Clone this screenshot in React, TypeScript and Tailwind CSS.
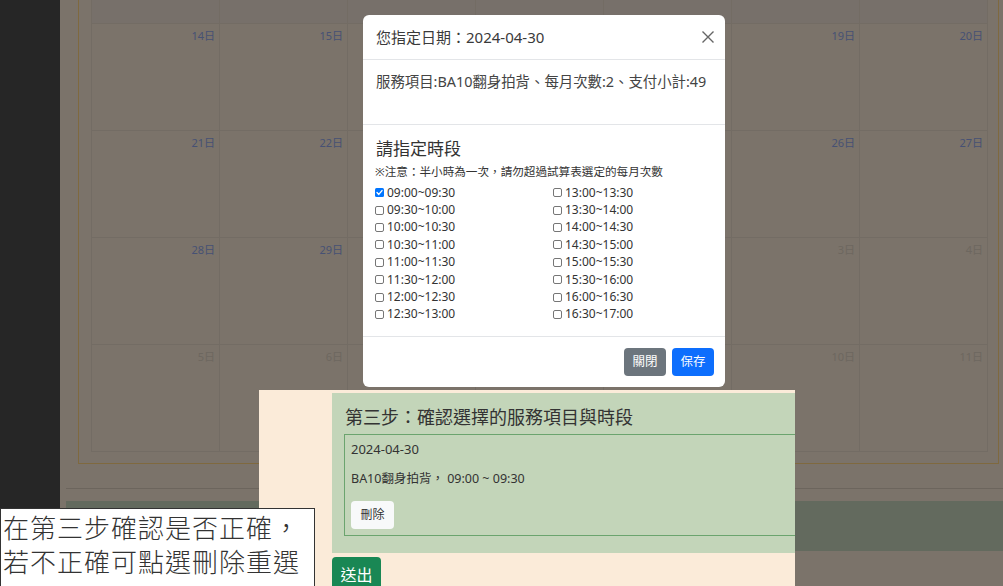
import React from 'react';

// Calendar weeks behind the dialog (dimmed by the backdrop).
// Days sitting under the dialog are left blank: they can't be seen.
type Cell = { day: number; out?: boolean; hidden?: boolean };

const mk = (days: number[], out: boolean[] = []): Cell[] =>
  days.map((d, i) => ({ day: d, out: out[i], hidden: i >= 2 && i <= 4 }));

const weeks: Cell[][] = [
  mk([14, 15, 16, 17, 18, 19, 20]),
  mk([21, 22, 23, 24, 25, 26, 27]),
  mk([28, 29, 30, 1, 2, 3, 4], [false, false, false, true, true, true, true]),
  mk([5, 6, 7, 8, 9, 10, 11], [true, true, true, true, true, true, true]),
];

const leftSlots = [
  '09:00~09:30', '09:30~10:00', '10:00~10:30', '10:30~11:00',
  '11:00~11:30', '11:30~12:00', '12:00~12:30', '12:30~13:00',
];
const rightSlots = [
  '13:00~13:30', '13:30~14:00', '14:00~14:30', '14:30~15:00',
  '15:00~15:30', '15:30~16:00', '16:00~16:30', '16:30~17:00',
];

const Checkbox: React.FC<{ checked?: boolean }> = ({ checked }) =>
  checked ? (
    <svg width="9" height="9" viewBox="0 0 9 9" className="mr-[3px] shrink-0">
      <rect x="0" y="0" width="9" height="9" rx="1.5" fill="#0075ff" />
      <path d="M2 4.6 L3.8 6.4 L7 2.6" fill="none" stroke="#fff" strokeWidth="1.4" strokeLinecap="round" strokeLinejoin="round" />
    </svg>
  ) : (
    <span className="mr-[3px] w-[9px] h-[9px] shrink-0 border border-[#767676] rounded-[2px] bg-white" />
  );

const SlotColumn: React.FC<{ slots: string[]; checked?: string }> = ({ slots, checked }) => (
  <div className="flex flex-col">
    {slots.map((s) => (
      <label key={s} className="flex items-center h-[17.4px] text-[12px] text-[#333]">
        <Checkbox checked={s === checked} />
        {s}
      </label>
    ))}
  </div>
);

const App: React.FC = () => {
  return (
    <div className="relative w-[1003px] h-[586px] overflow-hidden flex bg-[#7b736a] font-['Noto_Sans','Noto_Sans_CJK_TC',sans-serif]">
      {/* Sidebar */}
      <div className="w-[60px] shrink-0 bg-[#262626]" />

      {/* Main area (dimmed) */}
      <div className="flex-1 flex flex-col pl-[6px]">
        <div className="ml-[12px] w-[921px] border-x border-b border-[#7f693f] pl-[12px] pr-[10px] pb-[11px]">
          <div className="grid grid-cols-7 border-l border-[#736c64]">
            {Array.from({ length: 7 }).map((_, i) => (
              <div key={'top' + i} className="h-[24px] bg-[#77706a] border-r border-b border-[#736c64]" />
            ))}
            {weeks.map((week, wi) =>
              week.map((c) => (
                <div
                  key={wi + '-' + c.day}
                  className="h-[107px] border-r border-b border-[#736c64] flex justify-end pt-[6px] pr-[4px]"
                >
                  {!c.hidden && (
                    <span className={`text-[11px] leading-[12px] ${c.out ? 'text-[#6d675f]' : 'text-[#465174]'}`}>
                      {c.day}日
                    </span>
                  )}
                </div>
              ))
            )}
          </div>
        </div>
        <div className="mt-[24px] h-px bg-[#6c655d]" />
        <div className="mt-[12px] h-[50px] bg-[#636a5e]" />
      </div>

      {/* Dialog */}
      <div className="absolute left-[363px] top-[15px] w-[362px] h-[372px] bg-white rounded-[6px] flex flex-col text-[#3a3a3a]">
        <div className="h-[45px] shrink-0 border-b border-[#e3e5e8] flex items-center justify-between pl-[13px] pr-[11px]">
          <span className="text-[15px]">您指定日期：2024-04-30</span>
          <svg width="12" height="12" viewBox="0 0 12 12">
            <path d="M0.5 0.5 L11.5 11.5 M11.5 0.5 L0.5 11.5" stroke="#666" strokeWidth="1.4" />
          </svg>
        </div>
        <div className="h-[65px] shrink-0 border-b border-[#e3e5e8] pl-[13px] pt-[12px]">
          <p className="text-[14.4px] leading-[20px] text-[#444]">服務項目:BA10翻身拍背、每月次數:2、支付小計:49</p>
        </div>
        <div className="h-[212px] shrink-0 border-b border-[#e3e5e8] px-[12px] pt-[12px]">
          <h5 className="text-[17px] leading-[24px] pl-[1px] text-[#333]">請指定時段</h5>
          <p className="mt-[4px] text-[11.6px] leading-[14px] text-[#333]">※注意：半小時為一次，請勿超過試算表選定的每月次數</p>
          <div className="mt-[5px] grid grid-cols-[178px_1fr]">
            <SlotColumn slots={leftSlots} checked="09:00~09:30" />
            <SlotColumn slots={rightSlots} />
          </div>
        </div>
        <div className="h-[50px] shrink-0 flex items-center justify-end gap-[6px] pr-[11px]">
          <button className="w-[42px] h-[28px] rounded-[4px] bg-[#6c757d] text-white text-[12.5px]">關閉</button>
          <button className="w-[42px] h-[28px] rounded-[4px] bg-[#0d6efd] text-white text-[12.5px]">保存</button>
        </div>
      </div>

      {/* Step three panel (not dimmed) */}
      <div className="absolute left-[259px] top-[390px] w-[536px] h-[196px] bg-[#fbebd9] overflow-hidden pl-[73px] pt-[3px]">
        <div className="w-[640px] bg-[#c3d5b9] pt-[12px] px-[12px] pb-[17px]">
          <div className="text-[18px] leading-[24px] text-[#333] pl-[1px]">第三步：確認選擇的服務項目與時段</div>
          <div className="mt-[5px] h-[102px] border border-[#6ba46e] px-[6px] pt-[4px] text-[#333]">
            <div className="text-[13px] leading-[20px]">2024-04-30</div>
            <div className="mt-[10px] text-[12.5px] leading-[20px]">BA10翻身拍背， 09:00 ~ 09:30</div>
            <button className="mt-[12px] w-[43px] h-[28px] rounded-[4px] bg-[#f8f9fa] text-[12px] text-[#333]">刪除</button>
          </div>
        </div>
        <button className="mt-[4px] w-[49px] h-[36px] rounded-[4px] bg-[#198754] text-white text-[16px]">送出</button>
      </div>

      {/* Tutorial callout */}
      <div className="absolute left-0 top-[508px] w-[315px] h-[90px] bg-white border border-[#333] pl-[2px] pt-[1px] text-[26px] leading-[34px] tracking-[1px] font-light text-[#333] font-['Noto_Sans_CJK_TC',sans-serif]">
        <div>在第三步確認是否正確，</div>
        <div>若不正確可點選刪除重選</div>
      </div>
    </div>
  );
};

export default App;
